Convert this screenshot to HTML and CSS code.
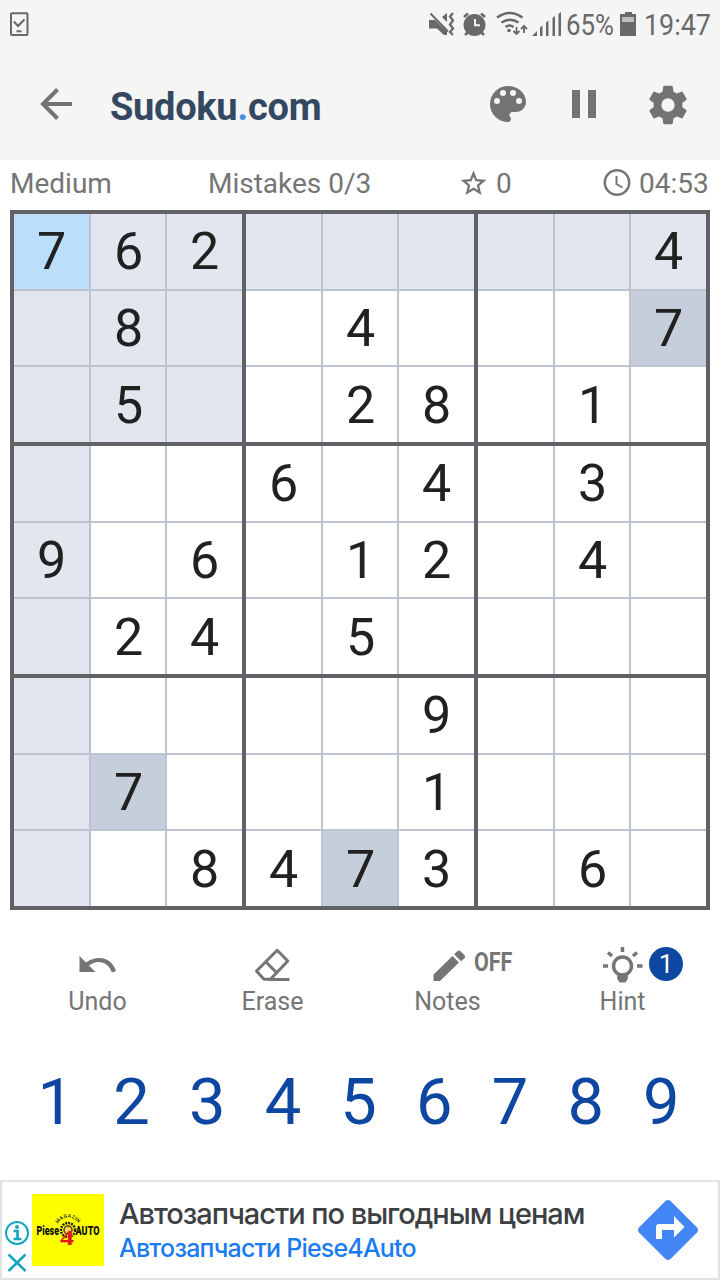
FILE: index.html
```html
<!DOCTYPE html>
<html lang="en">
<head>
<meta charset="utf-8">
<title>Sudoku.com</title>
<link rel="stylesheet" href="styles.css">
</head>
<body>
<div class="screen">
  <header class="header">
    <div class="status">
      <svg class="status-note" width="20" height="25" viewBox="0 0 20 25" fill="none" stroke="#696969" stroke-width="2">
        <rect x="2" y="1.200" width="16.500" height="21.800" rx="1"/><path d="M4.800 9.500l4.200 4.500 6.500-6.500M7.500 19.200h5"/>
      </svg>
      <svg width="292" height="50" viewBox="0 0 292 50" class="status-right">
        <path d="M1 20h6l12 11.500v3.500h-3l-7-6.500H1zM19 13v9l-5-5z" fill="#696969"/>
        <path d="M2.500 13.500l17.500 18" fill="none" stroke="#696969" stroke-width="2"/>
        <path d="M25 13l-3 3.500 3 4-3 4 3 4-3 3.500 3 3" fill="none" stroke="#696969" stroke-width="2.300"/>
        <g fill="none" stroke="#696969" stroke-width="2.500">
          <circle cx="46.500" cy="25" r="9.700" fill="#696969"/>
          <path d="M36 17l4-3.500M57 17l-4-3.500M40 32l-3 3M53 32l3 3"/>
          <path d="M47 19v6.300h5" stroke="#f5f5f5" stroke-width="2"/>
          <path d="M69 17.500q13-9 25.500 0M73.500 22.500q8.500-5.500 17 0M77.500 27q4-3 8 0"/>
          <path d="M88.500 27v7M85.500 31l3 3 3-3M96 33v-7M93 29l3-3 3 3" stroke-width="1.800"/>
        </g>
        <circle cx="81" cy="30.500" r="1.800" fill="#696969"/>
        <g fill="#696969"><path d="M104 36l5-5v5zM112 27.500l2.500-2V36H112zM118 22.500l2.500-2V36H118zM124.500 18l2.500-2V36h-2.500zM130.500 14l2.500-2V36h-2.500z"/>
          <path d="M197 12h7v2h4v22h-16V14h5z"/><path d="M194 17h12v5h-12z" fill="#bdbdbd"/>
        </g>
        <text x="138" y="35" class="status-text" textLength="48" lengthAdjust="spacingAndGlyphs">65%</text>
        <text x="216" y="35" class="status-text" textLength="67" lengthAdjust="spacingAndGlyphs">19:47</text>
      </svg>
    </div>
    <div class="toolbar">
      <svg class="back" width="34" height="34" viewBox="0 0 34 34" fill="none" stroke="#737373" stroke-width="4"><path d="M33 17H4M18.500 2.500L4 17l14.500 14.500"/></svg>
      <h1 class="brand">Sudoku<span class="dot">.</span>com</h1>
      <div class="tools">
        <svg width="48" height="48" viewBox="0 0 24 24"><path d="M12 3a9 9 0 0 0 0 18c.83 0 1.500-.67 1.500-1.500 0-.39-.15-.74-.39-1.010-.23-.26-.38-.61-.38-.99 0-.83.67-1.500 1.500-1.500H16c2.760 0 5-2.240 5-5 0-4.420-4.030-8-9-8zm-5.500 9a1.500 1.500 0 1 1 0-3 1.500 1.500 0 0 1 0 3zm3-4a1.500 1.500 0 1 1 0-3 1.500 1.500 0 0 1 0 3zm5 0a1.500 1.500 0 1 1 0-3 1.500 1.500 0 0 1 0 3zm3 4a1.500 1.500 0 1 1 0-3 1.500 1.500 0 0 1 0 3z"/></svg>
        <svg width="48" height="48" viewBox="0 0 24 24"><path d="M6 19h4V5H6v14zm8-14v14h4V5h-4z"/></svg>
        <svg class="gear" width="46" height="46" viewBox="0 0 24 24"><path d="M19.430 12.980c.04-.32.07-.64.07-.98s-.03-.66-.07-.98l2.110-1.650c.19-.15.24-.42.12-.64l-2-3.460c-.12-.22-.39-.3-.61-.22l-2.490 1c-.52-.4-1.080-.73-1.690-.98l-.38-2.650A.488.488 0 0 0 14 2h-4c-.25 0-.46.18-.49.42l-.38 2.650c-.61.25-1.170.59-1.690.98l-2.490-1c-.23-.09-.49 0-.61.22l-2 3.460c-.13.22-.07.49.12.64l2.110 1.650c-.04.32-.07.65-.07.98s.03.66.07.98l-2.110 1.650c-.19.15-.24.42-.12.64l2 3.460c.12.22.39.3.61.22l2.490-1c.52.4 1.080.73 1.690.98l.38 2.650c.03.24.24.42.49.42h4c.25 0 .46-.18.49-.42l.38-2.650c.61-.25 1.170-.59 1.690-.98l2.490 1c.23.09.49 0 .61-.22l2-3.460c.12-.22.07-.49-.12-.64l-2.110-1.650zM12 15.500a3.500 3.500 0 1 1 0-7 3.500 3.500 0 0 1 0 7z"/></svg>
      </div>
    </div>
  </header>

  <div class="info">
    <span class="level">Medium</span>
    <span class="mistakes">Mistakes 0/3</span>
    <span class="score"><svg width="26" height="26" viewBox="0 0 26 26" fill="none" stroke="#757575" stroke-width="2.300"><path d="M13.500 2.500l2.700 6.700 7.300.6-5.500 4.700 1.700 7.100-6.200-3.800-6.200 3.800 1.700-7.100-5.500-4.700 7.300-.6z"/></svg>0</span>
    <span class="time"><svg width="28" height="28" viewBox="0 0 28 28" fill="none" stroke="#757575" stroke-width="2.500"><circle cx="14" cy="12.500" r="12.200" /><path d="M13.500 6v8l6 3.500" stroke-width="2"/></svg>04:53</span>
  </div>

  <main class="board">
    <div class="box">
      <i class="cell selected">7</i><i class="cell peer">6</i><i class="cell peer">2</i>
      <i class="cell peer"></i><i class="cell peer">8</i><i class="cell peer"></i>
      <i class="cell peer"></i><i class="cell peer">5</i><i class="cell peer"></i>
    </div>
    <div class="box">
      <i class="cell peer"></i><i class="cell peer"></i><i class="cell peer"></i>
      <i class="cell"></i><i class="cell">4</i><i class="cell"></i>
      <i class="cell"></i><i class="cell">2</i><i class="cell">8</i>
    </div>
    <div class="box">
      <i class="cell peer"></i><i class="cell peer"></i><i class="cell peer">4</i>
      <i class="cell"></i><i class="cell"></i><i class="cell same">7</i>
      <i class="cell"></i><i class="cell">1</i><i class="cell"></i>
    </div>
    <div class="box">
      <i class="cell peer"></i><i class="cell"></i><i class="cell"></i>
      <i class="cell peer">9</i><i class="cell"></i><i class="cell">6</i>
      <i class="cell peer"></i><i class="cell">2</i><i class="cell">4</i>
    </div>
    <div class="box">
      <i class="cell">6</i><i class="cell"></i><i class="cell">4</i>
      <i class="cell"></i><i class="cell">1</i><i class="cell">2</i>
      <i class="cell"></i><i class="cell">5</i><i class="cell"></i>
    </div>
    <div class="box">
      <i class="cell"></i><i class="cell">3</i><i class="cell"></i>
      <i class="cell"></i><i class="cell">4</i><i class="cell"></i>
      <i class="cell"></i><i class="cell"></i><i class="cell"></i>
    </div>
    <div class="box">
      <i class="cell peer"></i><i class="cell"></i><i class="cell"></i>
      <i class="cell peer"></i><i class="cell same">7</i><i class="cell"></i>
      <i class="cell peer"></i><i class="cell"></i><i class="cell">8</i>
    </div>
    <div class="box">
      <i class="cell"></i><i class="cell"></i><i class="cell">9</i>
      <i class="cell"></i><i class="cell"></i><i class="cell">1</i>
      <i class="cell">4</i><i class="cell same">7</i><i class="cell">3</i>
    </div>
    <div class="box">
      <i class="cell"></i><i class="cell"></i><i class="cell"></i>
      <i class="cell"></i><i class="cell"></i><i class="cell"></i>
      <i class="cell"></i><i class="cell">6</i><i class="cell"></i>
    </div>
  </main>

  <nav class="actions">
    <div class="action">
      <svg width="40" height="40" viewBox="0 0 40 40"><path d="M1.500 12v16h16l-6.500-6.500Q16.500 17.500 21.500 18q9 .8 12.500 10.500l4-1.500Q33.500 14.500 21.500 14q-7.500 0-13.500 4.500z" fill="#757575"/></svg>
      <span>Undo</span>
    </div>
    <div class="action">
      <svg width="40" height="40" viewBox="0 0 40 40" fill="none" stroke="#757575" stroke-width="3"><path d="M24.200 6.300L34.800 17 17.500 35.300H11L3.500 27zM13 18L23.500 28.500M15.500 35.400h21" stroke-linejoin="round"/></svg>
      <span>Erase</span>
    </div>
    <div class="action">
      <svg width="40" height="40" viewBox="0 0 40 40" fill="#757575"><path d="M5.500 30.500L24.500 12l6.500 6.500L12 37H5.500zM26.200 10.200l3-3q1.700-1.500 3.300 0l4 4q1.400 1.700 0 3l-3.500 3z"/></svg>
      <span>Notes</span>
      <b class="off">OFF</b>
    </div>
    <div class="action">
      <svg width="40" height="40" viewBox="0 0 40 40" fill="none" stroke="#757575" stroke-width="3.500"><circle cx="19.500" cy="22" r="9"/><path d="M19.500 3v5M0 22h5M34 22h5.500M5 8.500l4 3.500M34 8.500L30 12"/><path d="M14.200 30.500h10.600v4.500l-2.500 3.500h-5.500L14.200 35z" fill="#757575" stroke="none"/></svg>
      <span>Hint</span>
      <b class="badge">1</b>
    </div>
  </nav>

  <div class="pad"><span>1</span><span>2</span><span>3</span><span>4</span><span>5</span><span>6</span><span>7</span><span>8</span><span>9</span></div>

  <aside class="ad">
    <div class="ad-marks">
      <svg width="25" height="25" viewBox="0 0 25 25" fill="none" stroke="#16a5bf" stroke-width="2"><circle cx="13" cy="12" r="11"/><path d="M9.500 10h4v8M9.500 18h8" stroke-width="2.700"/><circle cx="13" cy="6" r="2" fill="#16a5bf" stroke="none"/></svg>
      <svg width="25" height="20" viewBox="0 0 25 20" fill="none" stroke="#16a5bf" stroke-width="2.500"><path d="M4.500 1.500l17 16.500M21.500 1.500L4.500 18"/></svg>
    </div>
    <svg class="ad-logo" width="72" height="72" viewBox="0 0 72 72">
      <path d="M0 0h72v72H0z" fill="#ff0"/>
      <circle cx="36" cy="36" r="7" fill="none" stroke="#222" stroke-width="2.500" stroke-dasharray="2 1"/>
      <circle cx="36" cy="36" r="4" fill="#ffd84d" stroke="#533" stroke-width="1.500"/>
      <path id="arc" d="M25.500 30Q36 16.500 47.500 30.500" fill="none"/>
      <text class="ad-magazin"><textPath href="#arc" textLength="25">MAGAZIN</textPath></text>
      <text x="4.500" y="41" class="ad-word" textLength="22.500" lengthAdjust="spacingAndGlyphs">Piese</text>
      <text x="43.500" y="41" class="ad-word" textLength="24" lengthAdjust="spacingAndGlyphs">AUTO</text>
      <text x="28" y="51" class="ad-four" textLength="14" lengthAdjust="spacingAndGlyphs">4</text>
    </svg>
    <div class="ad-text">
      <div class="ad-title">Автозапчасти по выгодным ценам</div>
      <div class="ad-sub">Автозапчасти Piese4Auto</div>
    </div>
    <svg class="ad-go" width="62" height="62" viewBox="0 0 62 62"><path d="M28.500 2q2.500-2 5 0L60 28.500q2 2.500 0 5L33.500 60q-2.500 2-5 0L2 33.500q-2-2.500 0-5z" fill="#4285f4"/><path d="M19 40V28q0-3 3-3h15v-8l10.500 11L37 38.500V31H25v9z" fill="#fff"/></svg>
  </aside>
</div>
</body>
</html>
```
FILE: styles.css
```css
* { box-sizing: border-box; }
body { margin: 0; font-family: Roboto, "Liberation Sans", sans-serif; background: #fff; }
svg { display: block; flex: none; }
.screen { width: 720px; height: 1280px; overflow: hidden; display: flex; flex-direction: column; }

.header { height: 160px; background: #f5f5f5; }
.status { height: 50px; display: flex; justify-content: space-between; }
.status-note { margin: 12px 0 0 9px; }
.status-text { font-size: 30px; fill: #696969; }
.toolbar { height: 108px; padding: 0 31px 0 39px; display: flex; align-items: center; }
.back { margin-bottom: 1px; }
.brand { margin: 6px 0 0 37px; font-size: 38px; line-height: 44px; font-weight: 700; color: #344861; letter-spacing: -0.3px; }
.dot { color: #4a90e2; }
.tools { margin-left: auto; display: flex; gap: 28px; align-items: center; fill: #737373; }
.tools .gear { margin-left: 9px; margin-right: -2px; margin-top: 2px; }

.info { height: 50px; padding: 0 10px; display: grid; grid-template-columns: 198px 252px 143px 107px; align-items: center; font-size: 28px; line-height: 46px; color: #757575; }
.info span { display: flex; align-items: center; white-space: nowrap; margin-top: -3px; }
.score svg { margin-right: 10px; }
.time svg { margin-right: 8px; overflow: visible; }

.board { width: 700px; height: 700px; margin: 0 10px; border: 4px solid #606265; background: #606265; display: grid; grid-template-columns: repeat(3, 228px); grid-template-rows: repeat(3, 228px); gap: 4px; }
.box { background: #bdc4d1; display: grid; grid-template-columns: 75px 74px 75px; grid-template-rows: 75px 74px 75px; gap: 2px; }
.cell { background: #fff; font-style: normal; font-size: 52px; line-height: 76px; text-align: center; color: #212121; }
.cell:nth-child(3n + 2) { padding-left: 1px; }
.cell:nth-child(n + 7) { line-height: 78px; }
.peer { background: #e2e6ee; }
.same { background: #c7cedb; }
.selected { background: #bbdefb; }

.actions { height: 130px; padding: 34px 10px 0; display: grid; grid-template-columns: repeat(4, 175px); }
.action { position: relative; display: flex; flex-direction: column; align-items: center; font-size: 25px; line-height: 30px; color: #757575; gap: 3px; }
.off { position: absolute; left: 114px; top: 4px; font-size: 25px; transform: scaleX(0.86); transform-origin: left; }
.badge { position: absolute; left: 114px; top: 3px; width: 34px; height: 34px; border-radius: 50%; background: #0d47a1; color: #fff; font-size: 26px; line-height: 35px; font-weight: 400; text-align: center; }

.pad { height: 140px; padding: 22px 20px 0 18px; display: grid; grid-template-columns: repeat(9, 75.7px); font-size: 65px; line-height: 80px; text-align: center; color: #0d47a1; }

.ad { height: 100px; border: 2px solid #e2e2e2; display: flex; align-items: flex-start; }
.ad-marks { width: 30px; padding: 39px 0 0 2px; display: flex; flex-direction: column; gap: 7px; }
.ad-logo { margin-top: 12px; }
.ad-magazin { font-size: 5px; font-weight: 700; fill: #332; }
.ad-word { font-size: 12px; font-weight: 900; fill: #111; }
.ad-four { font: 900 22px "Liberation Serif", serif; fill: #e8151b; }
.ad-text { margin: 13px 0 0 15px; font-family: Inter, sans-serif; white-space: nowrap; font-weight: 500; }
.ad-title { font-size: 29px; line-height: 38px; color: #3c4043; letter-spacing: -1.05px; }
.ad-sub { font-size: 25px; line-height: 31px; color: #1a7af0; letter-spacing: -0.8px; }
.ad-go { margin: 17px 19px 0 auto; }
```
